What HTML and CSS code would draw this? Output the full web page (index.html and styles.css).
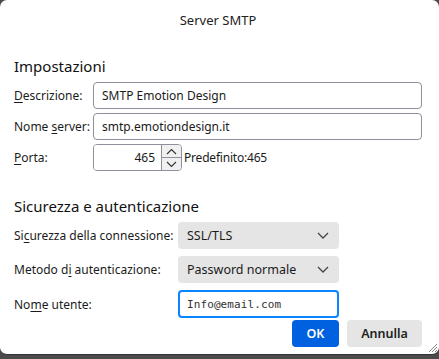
FILE: index.html
```html
<!DOCTYPE html>
<html lang="it">
<head>
    <meta charset="UTF-8">
    <title>Server SMTP</title>
    <link rel="stylesheet" href="styles.css">
</head>
<body>
    <div class="dialog">
        <div class="title">Server SMTP</div>

        <h2>Impostazioni</h2>
        <div class="grid grid-server">
            <label><u>D</u>escrizione:</label>
            <input type="text" class="field" value="SMTP Emotion Design">

            <label>Nome <u>s</u>erver:</label>
            <input type="text" class="field" value="smtp.emotiondesign.it">

            <label><u>P</u>orta:</label>
            <div class="port-row">
                <div class="spinner">
                    <input type="text" class="port" value="465">
                    <div class="spin-btns">
                        <span class="spin">
                            <svg width="11" height="7" viewBox="0 0 11 7"><path d="M1 6 L5.5 1.5 L10 6" fill="none" stroke="#333" stroke-width="1.1"/></svg>
                        </span>
                        <span class="spin">
                            <svg width="11" height="7" viewBox="0 0 11 7"><path d="M1 1 L5.5 5.5 L10 1" fill="none" stroke="#333" stroke-width="1.1"/></svg>
                        </span>
                    </div>
                </div>
                <span class="default">Predefinito:465</span>
            </div>
        </div>

        <h2 class="second">Sicurezza e autenticazione</h2>
        <div class="grid grid-auth">
            <label>Si<u>c</u>urezza della connessione:</label>
            <div class="select">SSL/TLS
                <svg width="12" height="7" viewBox="0 0 12 7"><path d="M1 1 L6 6 L11 1" fill="none" stroke="#444" stroke-width="1.3"/></svg>
            </div>

            <label>Metodo d<u>i</u> autenticazione:</label>
            <div class="select">Password normale
                <svg width="12" height="7" viewBox="0 0 12 7"><path d="M1 1 L6 6 L11 1" fill="none" stroke="#444" stroke-width="1.3"/></svg>
            </div>

            <label>No<u>m</u>e utente:</label>
            <input type="text" class="user" value="Info@email.com">
        </div>

        <div class="buttons">
            <button class="ok">OK</button>
            <button class="cancel">Annulla</button>
        </div>

        <svg class="grip" width="12" height="12" viewBox="0 0 12 12">
            <path d="M11 3 L3 11 M11 6 L6 11 M11 9 L9 11" stroke="#888" stroke-width="1"/>
        </svg>
    </div>
</body>
</html>
```

FILE: styles.css
```css
body {
    margin: 0;
    background-color: #4a4a4a;
    font-family: "Noto Sans", "Open Sans", sans-serif;
    font-size: 12px;
    color: #1b1b1b;
}
.dialog {
    position: relative;
    width: 439px;
    height: 355px;
    box-sizing: border-box;
    padding: 0 17px 0 14px;
    background-color: #fff;
    border-radius: 7px;
    border-bottom: 1px solid #333;
}
.title {
    text-align: center;
    font-size: 13px;
    padding-top: 11px;
    height: 27px;
    color: #222;
}
h2 {
    margin: 18px 0 6px 0;
    font-size: 15px;
    font-weight: normal;
    line-height: 20px;
    color: #111;
}
h2.second {
    margin-top: 25px;
    margin-bottom: 6px;
}
.grid {
    display: grid;
    align-items: center;
}
.grid-server {
    grid-template-columns: 79px 1fr;
    row-gap: 4px;
}
.grid-auth {
    grid-template-columns: 164px 161px;
    row-gap: 7px;
}
label {
    white-space: nowrap;
}
u {
    text-decoration-thickness: 1px;
    text-underline-offset: 2px;
}
input {
    font: inherit;
    color: #1b1b1b;
    outline: none;
}
.field {
    height: 27px;
    box-sizing: border-box;
    border: 1px solid #8f8f9d;
    border-radius: 4px;
    padding: 0 8px;
}
.port-row {
    display: flex;
    align-items: center;
}
.spinner {
    display: flex;
    height: 27px;
    width: 89px;
    box-sizing: border-box;
    border: 1px solid #8f8f9d;
    border-radius: 4px;
    overflow: hidden;
}
.port {
    width: 61px;
    border: none;
    text-align: right;
    padding: 0 6px 0 0;
}
.spin-btns {
    display: flex;
    flex-direction: column;
    border-left: 1px solid #8f8f9d;
    flex: 1;
}
.spin {
    flex: 1;
    display: flex;
    align-items: center;
    justify-content: center;
    background-color: #f0f0f0;
}
.spin + .spin {
    border-top: 1px solid #8f8f9d;
}
.default {
    margin-left: 2px;
    letter-spacing: -0.2px;
}
.select {
    height: 27px;
    box-sizing: border-box;
    display: flex;
    align-items: center;
    justify-content: space-between;
    padding: 0 10px 0 9px;
    background-color: #e5e5e5;
    border-radius: 4px;
    font-size: 12.5px;
}
.user {
    height: 28px;
    box-sizing: border-box;
    border: 2px solid #0a84ff;
    border-radius: 4px;
    padding: 0 7px;
    font-family: "DejaVu Sans Mono", monospace;
    font-size: 11px;
    color: #333;
    letter-spacing: 0.1px;
}
.buttons {
    display: flex;
    justify-content: flex-end;
    gap: 8px;
    margin-top: 2px;
}
button {
    height: 27px;
    border: none;
    border-radius: 4px;
    font: inherit;
    font-size: 12.5px;
    font-weight: 600;
    cursor: pointer;
}
.ok {
    width: 47px;
    background-color: #0061e0;
    color: #fff;
}
.cancel {
    width: 75px;
    background-color: #e5e5e5;
    color: #222;
}
.grip {
    position: absolute;
    right: 1px;
    bottom: 1px;
}
```
